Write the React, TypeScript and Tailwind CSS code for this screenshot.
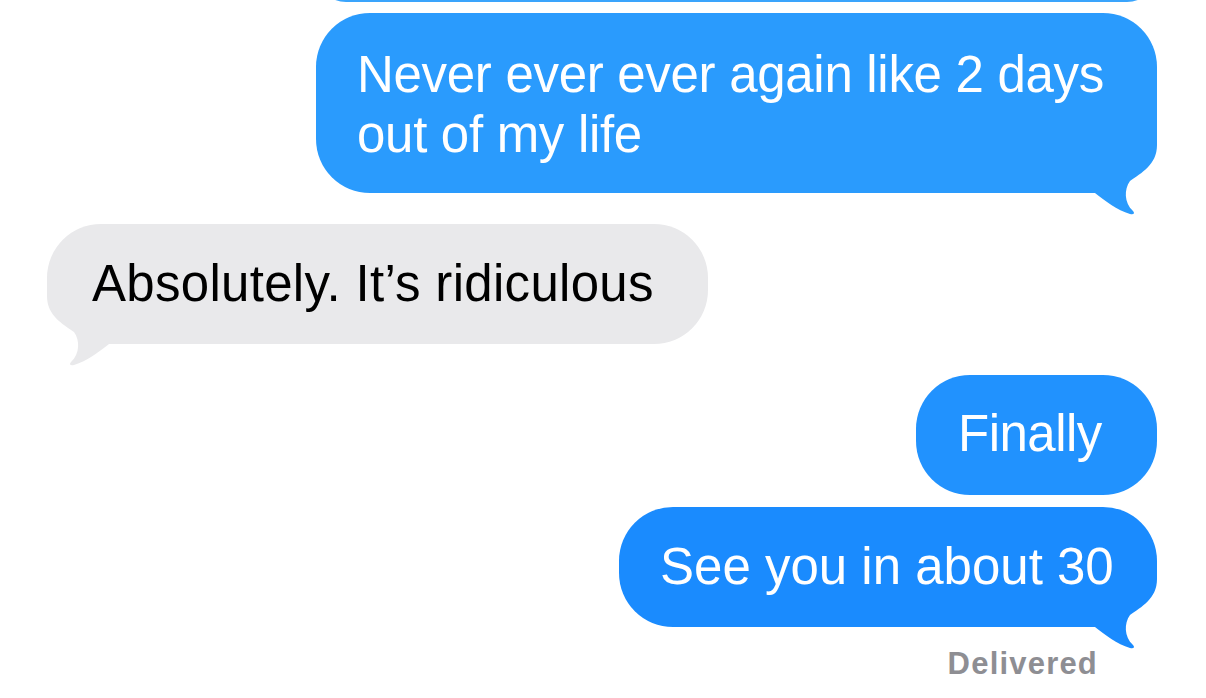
import React from "react";

const font = { fontFamily: '"Liberation Sans", Arial, sans-serif' };

function RightTail({ color }: { color: string }) {
  return (
    <svg
      className="absolute right-0 bottom-[-22px] w-[80px] h-[82px]"
      viewBox="0 0 80 82"
    >
      <path
        d="M0 0 L80 0 L80 12 C80 32 64 40 53 48 C47 56 47 70 56 78 C58 80 57 82 53 81 C40 77 28 68 18 60 L0 60 Z"
        fill={color}
      />
    </svg>
  );
}

function LeftTail({ color }: { color: string }) {
  return (
    <svg
      className="absolute left-0 bottom-[-22px] w-[80px] h-[82px]"
      viewBox="0 0 80 82"
    >
      <path
        d="M80 0 L0 0 L0 12 C0 32 16 40 27 48 C33 56 33 70 24 78 C22 80 23 82 27 81 C40 77 52 68 62 60 L80 60 Z"
        fill={color}
      />
    </svg>
  );
}

export default function App() {
  return (
    <div
      className="w-[1206px] h-[698px] overflow-hidden bg-white flex flex-col"
      style={font}
    >
      {/* partial bubble from previous message */}
      <div className="self-end mr-[49px] mt-[-58px] w-[841px] h-[60px] shrink-0 rounded-[54px] bg-[#3aa4fc]" />

      {/* bubble 1 */}
      <div className="relative self-end mr-[49px] mt-[11px] w-[841px] shrink-0 rounded-[54px] rounded-br-[80px_60px] bg-[#2a9bfd] pl-[41px] pt-[32px] pb-[28px] text-[51px] leading-[60px] tracking-[-0.3px] text-white whitespace-nowrap">
        <RightTail color="#2a9bfd" />
        <span className="relative">
          Never ever ever again like 2 days
          <br />
          out of my life
        </span>
      </div>

      {/* gray bubble */}
      <div className="relative self-start ml-[47px] mt-[31px] w-[661px] shrink-0 rounded-[54px] rounded-bl-[80px_60px] bg-[#e9e9eb] pl-[45px] pt-[30px] pb-[30px] text-[51px] leading-[60px] tracking-[0.3px] text-black whitespace-nowrap">
        <LeftTail color="#e9e9eb" />
        <span className="relative">Absolutely. It’s ridiculous</span>
      </div>

      {/* Finally */}
      <div className="self-end mr-[49px] mt-[31px] w-[241px] shrink-0 rounded-[54px] bg-[#2192fe] pl-[42px] pt-[29px] pb-[31px] text-[51px] leading-[60px] tracking-[-0.5px] text-white whitespace-nowrap">
        Finally
      </div>

      {/* See you */}
      <div className="relative self-end mr-[49px] mt-[12px] w-[538px] shrink-0 rounded-[54px] rounded-br-[80px_60px] bg-[#1a8bfe] pl-[41px] pt-[30px] pb-[30px] text-[51px] leading-[60px] text-white whitespace-nowrap">
        <RightTail color="#1a8bfe" />
        <span className="relative">See you in about 30</span>
      </div>

      <div className="self-end mr-[108px] mt-[22px] text-[31px] leading-[30px] font-bold tracking-[1.2px] text-[#8e8e93] whitespace-nowrap">
        Delivered
      </div>
    </div>
  );
}
